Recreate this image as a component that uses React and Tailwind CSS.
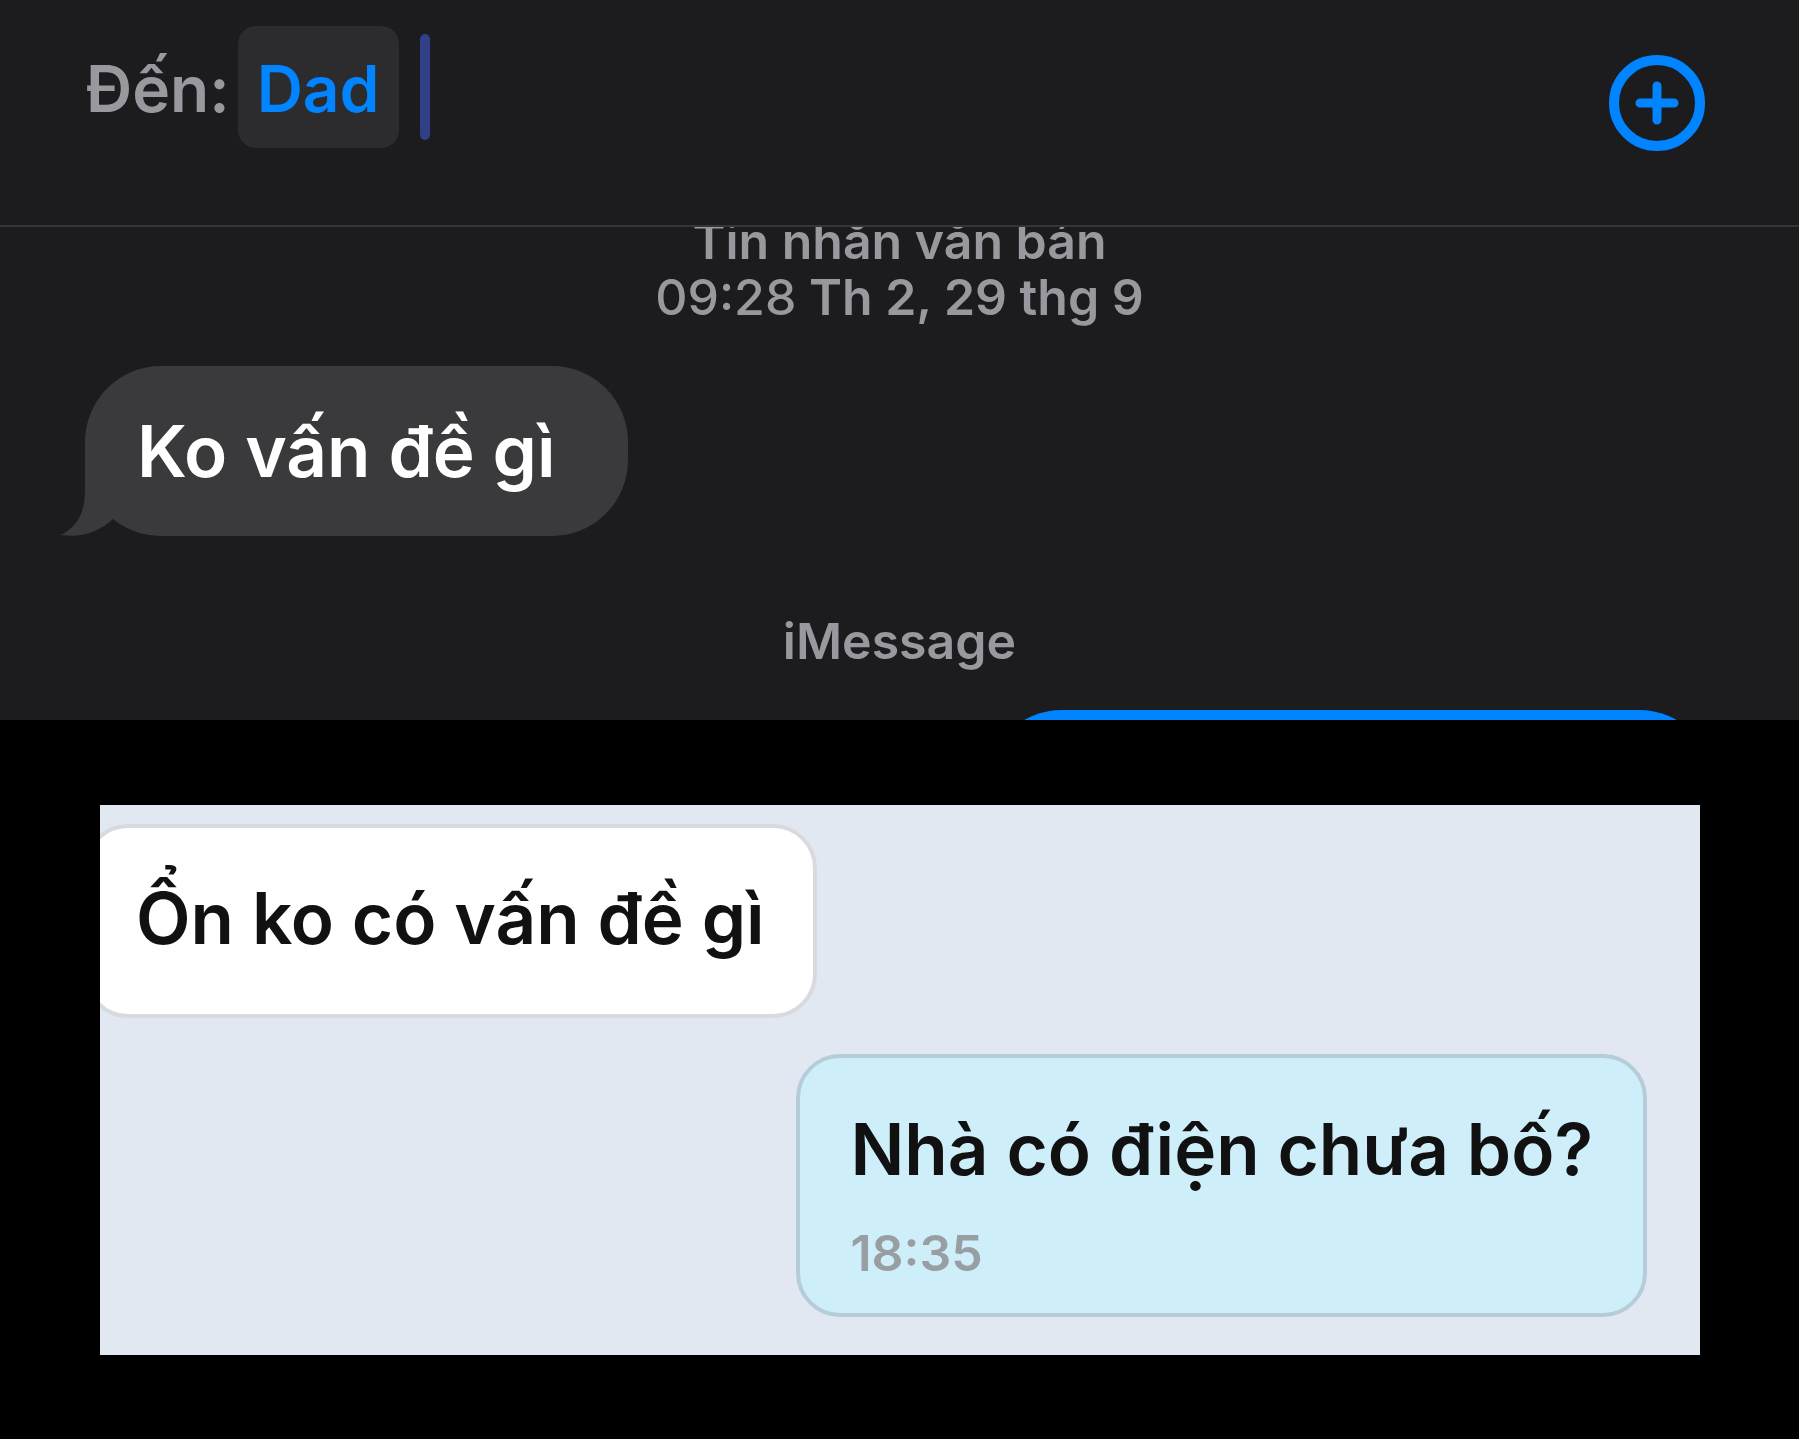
// App.jsx

import React from 'react';

const PlusIcon = () => (
  <svg className="size-24" viewBox="0 0 96 96" fill="none" stroke="currentColor" aria-hidden="true">
    <circle cx="48" cy="48" r="43" strokeWidth="10" />
    <path d="M48 31V65M31 48H65" strokeWidth="9" strokeLinecap="round" />
  </svg>
);

const BubbleTail = () => (
  <svg className="absolute bottom-0 -left-6 h-[96px] w-[84px]" viewBox="0 0 84 96" aria-hidden="true">
    <path d="M24 0V50C24 72 17 86 0 95C20 98 38 92 52 79L80 50V0Z" fill="#3a3a3d" />
  </svg>
);

const RecipientBar = () => (
  <header className="flex items-start border-b-2 border-[#353537] pt-[26px] pr-[94px] pb-[74px] pl-[86px]">
    <label htmlFor="recipient" className="pt-1 text-[64px] leading-[118px] font-semibold text-[#98989f]">
      Đến:
    </label>
    <button
      type="button"
      className="ml-2 rounded-[18px] bg-[#2c2c2f] px-[19px] pt-1 text-[64px] leading-[118px] font-semibold text-[#0084ff]"
    >
      Dad
    </button>
    <span className="mt-2 ml-[21px] h-[106px] w-[10px] shrink-0 rounded-full bg-[#313f88]"></span>
    <input
      id="recipient"
      type="text"
      className="h-[122px] min-w-0 flex-1 bg-transparent text-[64px] text-white outline-none"
    />
    <button type="button" aria-label="Thêm liên hệ" className="mt-[29px] shrink-0 text-[#0084ff]">
      <PlusIcon />
    </button>
  </header>
);

const MessagesThread = () => (
  <section className="bg-[#1c1c1e]">
    <RecipientBar />
    <div className="overflow-hidden">
      <div className="-mt-3.5 text-center text-[50px] leading-[56px] font-semibold text-[#98989f]">
        <p>Tin nhắn văn bản</p>
        <p>
          <span className="font-medium">09:28</span> Th 2, 29 thg 9
        </p>
      </div>

      <div className="mt-[41px] flex pl-[85px]">
        <div className="relative rounded-[76px] bg-[#3a3a3d] py-[45px] pr-[72px] pl-[52px]">
          <BubbleTail />
          <p className="relative text-[71px] leading-[80px] font-semibold text-white">Ko vấn đề gì</p>
        </div>
      </div>

      <p className="mt-[77px] text-center text-[50px] leading-[56px] font-semibold text-[#98989f]">iMessage</p>

      {/* next sent bubble, only its top edge is scrolled into view */}
      <div className="mt-[41px] flex h-[10px] justify-end overflow-hidden pr-[84px]">
        <div className="h-[170px] w-[729px] shrink-0 rounded-[76px] bg-[#0084ff]"></div>
      </div>
    </div>
  </section>
);

const ChatPanel = () => (
  <section className="mt-[85px] mr-[99px] ml-[100px] overflow-hidden bg-[#e2e8f1] pt-[19px] pr-[53px] pb-[38px]">
    <div className="flex">
      <div className="-ml-4 rounded-[44px] border-4 border-[#d8dadf] bg-white px-12 pt-[50px] pb-[56px]">
        <p className="text-[71px] leading-[80px] font-semibold text-[#111111]">Ổn ko có vấn đề gì</p>
      </div>
    </div>

    <div className="mt-9 flex justify-end">
      <div className="rounded-[44px] border-4 border-[#b5cdd9] bg-[#ceeefa] px-[50px] pt-[51px] pb-8">
        <p className="text-[71px] leading-[80px] font-semibold text-[#111111]">Nhà có điện chưa bố?</p>
        <time className="mt-9 block text-[50px] leading-[56px] font-semibold text-[#999ea3]">18:35</time>
      </div>
    </div>
  </section>
);

const App = () => {
  return (
    <main className="min-h-screen bg-black font-[Inter,sans-serif]">
      <MessagesThread />
      <ChatPanel />
    </main>
  );
};

export default App;
